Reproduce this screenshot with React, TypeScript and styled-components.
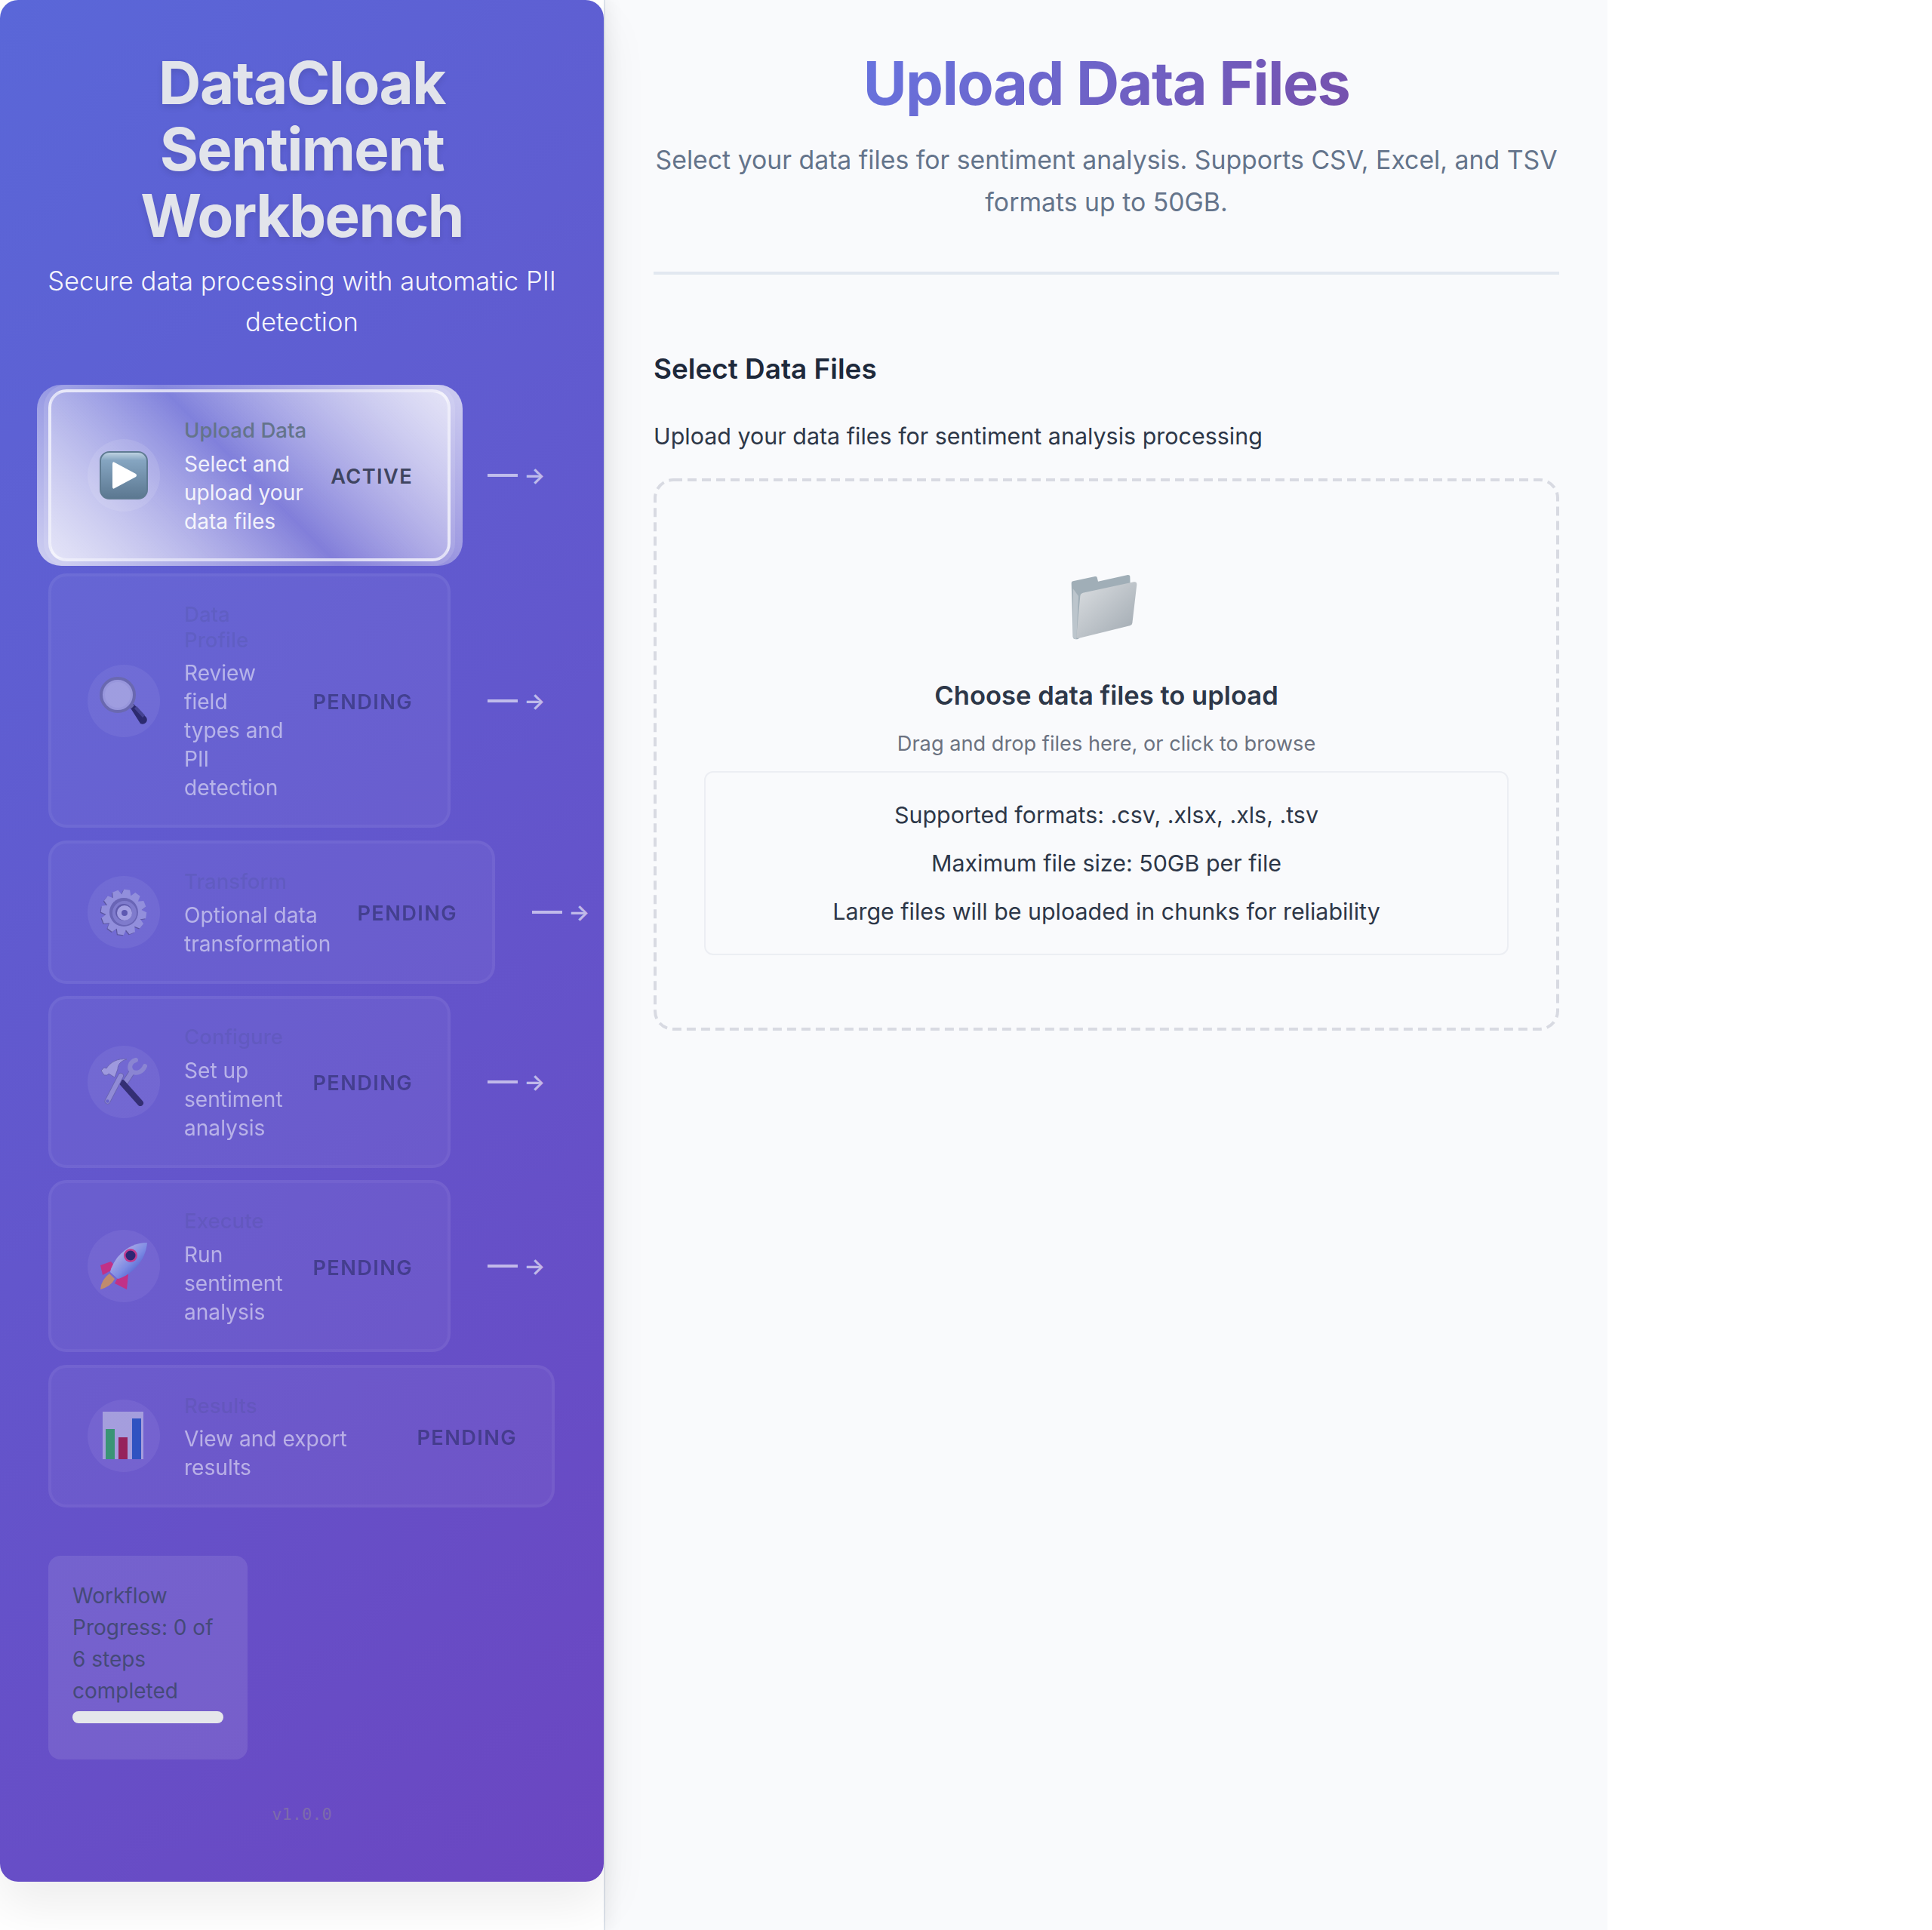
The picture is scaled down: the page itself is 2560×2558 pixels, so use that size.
import React from "react";
import styled, { createGlobalStyle, css } from "styled-components";

const GlobalStyle = createGlobalStyle`
  html, body {
    margin: 0;
    padding: 0;
    background: #fff;
    font-family: "Inter", "Liberation Sans", sans-serif;
  }
  * { box-sizing: border-box; }
`;

const Page = styled.div`
  display: flex;
  width: 2560px;
  min-height: 2558px;
  background: #fff;
`;

const SideColumn = styled.div`
  position: relative;
  z-index: 1;
  flex: 0 0 800px;
  width: 800px;
  min-width: 0;
  background: #fff;
  box-shadow: 8px 0 20px rgba(0, 0, 0, 0.05);
`;

const Sidebar = styled.aside`
  padding: 64px;
  height: 2494px;
  border-radius: 24px;
  color: #fff;
  background: linear-gradient(135deg, #5a67d8 0%, #6b46c1 100%);
  box-shadow: 0 32px 64px rgba(0, 0, 0, 0.07);
`;

const Brand = styled.h1`
  margin: 2px 0 16px;
  font-size: 78px;
  line-height: 88px;
  font-weight: 700;
  letter-spacing: -0.02em;
  text-align: center;
  color: #e2e4eb;
  text-shadow: 0 4px 8px rgba(0, 0, 0, 0.1);
`;

const Tagline = styled.p`
  margin: -1px -6px 63px;
  font-size: 34.65px;
  line-height: 54px;
  font-weight: 300;
  text-align: center;
  color: rgba(255, 255, 255, 0.95);
`;

const Steps = styled.div`
  display: flex;
  flex-direction: column;
  gap: 16.6px;
`;

const StepRow = styled.div`
  display: flex;
  align-items: center;
  isolation: isolate;
`;

const StepCard = styled.div<{ $active?: boolean; $width: number }>`
  position: relative;
  flex: 0 0 auto;
  display: flex;
  align-items: center;
  gap: 32px;
  width: ${(p) => p.$width}px;
  padding: 32px 48px;
  border-radius: 24px;
  border: 4px solid rgba(255, 255, 255, 0.08);
  background: rgba(255, 255, 255, 0.08);
  opacity: 0.6;
  ${(p) =>
    p.$active &&
    css`
      opacity: 1;
      border-color: rgba(255, 255, 255, 0.6);
      background: linear-gradient(
        45deg,
        rgba(255, 255, 255, 0.5) 0%,
        rgba(255, 255, 255, 0.08) 50%,
        rgba(255, 255, 255, 0.5) 100%
      );
      box-shadow: 0 0 0 6px rgba(255, 255, 255, 0.12);
      &::before {
        content: "";
        position: absolute;
        inset: -10px -20px -10px -19px;
        z-index: -1;
        border-radius: 32px;
        background: linear-gradient(
          45deg,
          rgba(255, 255, 255, 0.7) 0%,
          rgba(255, 255, 255, 0.15) 50%,
          rgba(255, 255, 255, 0.7) 100%
        );
      }
    `}
`;

const IconCircle = styled.div`
  flex: 0 0 96px;
  width: 96px;
  height: 96px;
  display: flex;
  align-items: center;
  justify-content: center;
  border-radius: 50%;
  background: rgba(255, 255, 255, 0.1);
`;

const StepText = styled.div`
  flex: 1 1 0;
  min-width: 0;
  margin: 2px 0 -2px;
`;

const StepTitle = styled.div<{ $active?: boolean }>`
  margin-bottom: 8px;
  font-size: 27.6px;
  line-height: 33.6px;
  font-weight: 500;
  white-space: ${(p) => (p.$active ? "nowrap" : "normal")};
  color: ${(p) => (p.$active ? "#64748b" : "rgba(70, 80, 130, 0.3)")};
`;

const StepDesc = styled.div`
  font-size: 28.1px;
  line-height: 38px;
  color: rgba(255, 255, 255, 0.9);
`;

const StepStatus = styled.div<{ $active?: boolean }>`
  flex: 0 0 auto;
  margin: 2px -2px -2px 0;
  font-size: 27.2px;
  font-weight: 600;
  letter-spacing: 1.4px;
  color: ${(p) => (p.$active ? "#3f4560" : "#2f3168")};
`;

const Connector = styled.div`
  flex: 0 0 auto;
  display: flex;
  align-items: center;
  gap: 8px;
  margin-left: 49px;
`;

const ConnectorLine = styled.div`
  width: 40px;
  height: 4px;
  background: rgba(255, 255, 255, 0.6);
`;

const ConnectorArrow = styled.span`
  font-size: 30px;
  font-weight: 600;
  line-height: 1;
  color: rgba(255, 255, 255, 0.6);
`;

const ProgressCard = styled.div`
  width: 264px;
  margin-top: 64px;
  padding: 32px 32px 48px;
  border-radius: 16px;
  background: rgba(255, 255, 255, 0.1);
`;

const ProgressText = styled.div`
  font-size: 28px;
  line-height: 42px;
  color: #454a78;
`;

const ProgressTrack = styled.div`
  height: 16px;
  margin-top: 6px;
  border-radius: 8px;
  background: #e5e7eb;
`;

const Version = styled.div`
  margin-top: 55px;
  font-family: "DejaVu Sans Mono", "Liberation Mono", monospace;
  font-size: 22px;
  line-height: 36px;
  text-align: center;
  color: #7d6bab;
`;

const Main = styled.main`
  flex: 0 0 1330px;
  padding: 64px;
  border-left: 2px solid #e2e8f0;
  background: #f9fafc;
`;

const Heading = styled.h2`
  width: fit-content;
  margin: 2px auto 30px;
  font-size: 79.2px;
  line-height: 88px;
  font-weight: 700;
  letter-spacing: -0.02em;
  text-align: center;
  color: transparent;
  background: linear-gradient(135deg, #6774e0 0%, #7650ac 100%);
  -webkit-background-clip: text;
  background-clip: text;
`;

const Lead = styled.p`
  margin: 0;
  font-size: 33.8px;
  line-height: 56.3px;
  text-align: center;
  color: #64748b;
`;

const Divider = styled.hr`
  height: 4px;
  margin: 63px 0 100px;
  border: 0;
  background: #e2e8f0;
`;

const SectionTitle = styled.h3`
  margin: 0 0 40px;
  font-size: 36.9px;
  line-height: 50px;
  font-weight: 600;
  color: #1e293b;
`;

const SectionHint = styled.p`
  margin: 0 0 32px;
  font-size: 30.45px;
  line-height: 48px;
  color: #2d3748;
`;

const DropZone = styled.div`
  position: relative;
  display: flex;
  flex-direction: column;
  align-items: center;
  height: 732px;
  padding: 126px 67px 0;
  border-radius: 24px;
`;

const DashedOutline = styled.svg`
  position: absolute;
  inset: 0;
  width: 100%;
  height: 100%;
  fill: none;
  stroke: #d8dae2;
  stroke-width: 4;
  stroke-dasharray: 12 7;
`;

const DropTitle = styled.div`
  margin-top: 40px;
  font-size: 34.6px;
  line-height: 50px;
  font-weight: 600;
  color: #2d3748;
`;

const DropHint = styled.div`
  margin-top: 19px;
  font-size: 27.2px;
  line-height: 42px;
  color: #6b7280;
`;

const FormatBox = styled.div`
  align-self: stretch;
  margin-top: 15px;
  padding: 24px 32px;
  border: 2px solid #eceef3;
  border-radius: 12px;
  text-align: center;
`;

const FormatLine = styled.div`
  font-size: 30.4px;
  line-height: 64px;
  color: #2d3748;
`;

const PlayIcon = () => (
  <svg width="64" height="64" viewBox="0 0 64 64">
    <defs>
      <linearGradient id="playFill" x1="0" y1="0" x2="0" y2="1">
        <stop offset="0" stopColor="#c3d6e4" />
        <stop offset="0.18" stopColor="#85a5c1" />
        <stop offset="1" stopColor="#5b7790" />
      </linearGradient>
    </defs>
    <rect x="1" y="1" width="62" height="62" rx="12" fill="url(#playFill)" stroke="#5f7b92" strokeWidth="2" />
    <path d="M17 17Q17 13 20 15L48 30Q50 32 48 34L20 49Q17 51 17 47Z" fill="#fff" />
  </svg>
);

const SearchIcon = () => (
  <svg width="64" height="64" viewBox="0 0 64 64">
    <path d="M40 40L45 36L62 54Q64 58 61 61Q58 64 54 62Z" fill="#0a0a30" />
    <path d="M46 42L49 39L60 51L57 54Z" fill="#33336a" />
    <path d="M38 38L42 34L46 38L42 42Z" fill="#71719b" />
    <circle cx="24" cy="24" r="22" fill="#bebee4" stroke="#71719b" strokeWidth="4" />
    <circle cx="24" cy="24" r="17" fill="#c9c9ea" />
  </svg>
);

const GearIcon = () => {
  const teeth = Array.from({ length: 12 }, (_, i) => i * 30);
  return (
    <svg width="64" height="64" viewBox="0 0 64 64">
      <g transform="translate(-1 1)">
        {teeth.map((deg) => (
          <path key={deg} d="M28 2L36 2L39 12L25 12Z" fill="#55527e" transform={`rotate(${deg + 8} 32 32)`} />
        ))}
      </g>
      {teeth.map((deg) => (
        <path key={deg} d="M28 2L36 2L39 12L25 12Z" fill="#b4b3e6" transform={`rotate(${deg + 8} 32 32)`} />
      ))}
      <circle cx="32" cy="32" r="23" fill="#b4b3e6" />
      <circle cx="32" cy="32" r="19" fill="#6f6da6" />
      <circle cx="33" cy="33" r="16" fill="#9492cc" />
      <circle cx="32" cy="32" r="11" fill="#5f5c96" />
      <circle cx="33" cy="33" r="10" fill="#cfcef0" />
      <circle cx="33" cy="33" r="4" fill="#5b589e" />
    </svg>
  );
};

const ToolsIcon = () => (
  <svg width="64" height="64" viewBox="0 0 64 64">
    <path d="M33 34L44 17" stroke="#6f6da0" strokeWidth="8.5" />
    <path d="M33 34L44 17" stroke="#a6a5d6" strokeWidth="6.5" />
    <path d="M48 3C40 5 38 14 43 18C48 22 57 19 60 11" fill="none" stroke="#a6a5d6" strokeWidth="6" strokeLinecap="round" />
    <path d="M30 33L54 60" stroke="#16153a" strokeWidth="8" strokeLinecap="round" />
    <path d="M28 24L10.5 57.5" stroke="#6f6da0" strokeWidth="8" strokeLinecap="round" />
    <path d="M28 24L10.5 57.5" stroke="#b0afdc" strokeWidth="6" strokeLinecap="round" />
    <circle cx="10.5" cy="57.5" r="2.2" fill="#6b68c8" />
    <path d="M2 17L6 13L9 14C14 6 24 0 36 2C28 4 24 9 24 15L20 26L12 21L10 23L6 23Z" fill="#c6c5ea" stroke="#6f6da0" strokeWidth="1" />
  </svg>
);

const RocketIcon = () => (
  <svg width="64" height="64" viewBox="0 0 64 64">
    <defs>
      <linearGradient id="rocketBody" x1="0.2" y1="0.2" x2="0.9" y2="0.9">
        <stop offset="0" stopColor="#eceffa" />
        <stop offset="0.5" stopColor="#8fb0f5" />
        <stop offset="1" stopColor="#2347c0" />
      </linearGradient>
    </defs>
    <path d="M1 31L15 26L22 34L4 44Z" fill="#ff1a5a" />
    <path d="M28 40L38 43L36 63L20 55Z" fill="#ff1a5a" />
    <path d="M13 42L20 49Q15 59 1 63Q2 50 13 42Z" fill="#ffb030" />
    <path d="M63 1C50 1 36 6 24 20C19 27 15 34 14 40L24 49C30 48 38 43 45 37C57 26 62 13 63 1Z" fill="url(#rocketBody)" />
    <circle cx="41" cy="18" r="9" fill="#ff2a6a" />
    <circle cx="41" cy="18" r="6.5" fill="#0a0a3c" />
  </svg>
);

const ChartIcon = () => (
  <svg width="64" height="64" viewBox="0 0 64 64">
    <rect x="4" y="0" width="54" height="63" fill="#d0d0eb" />
    <rect x="8" y="23" width="12" height="40" fill="#1ec13e" />
    <rect x="25" y="34" width="12" height="29" fill="#b70314" />
    <rect x="43" y="9" width="12" height="54" fill="#0d53bc" />
  </svg>
);

const FolderIcon = () => (
  <svg width="96" height="96" viewBox="117 60 288 288">
    <defs>
      <linearGradient id="folderFront" x1="0" y1="0" x2="1" y2="1">
        <stop offset="0" stopColor="#dcdfe2" />
        <stop offset="1" stopColor="#9fa8b0" />
      </linearGradient>
    </defs>
    <path d="M122 98Q122 92 128 91L216 72Q222 71 224 76L228 92L346 66Q354 65 355 72L356 110L150 320Q130 326 128 312Z" fill="#a0aeb7" />
    <path d="M128 120L128 312Q130 324 142 320L150 150Z" fill="#bcc5cc" />
    <path d="M157 150Q158 140 168 137L370 94Q382 92 382 104L364 258Q363 266 354 268L150 318Q140 320 142 310Z" fill="url(#folderFront)" />
  </svg>
);

const steps = [
  { title: "Upload Data", desc: "Select and upload your data files", status: "ACTIVE", width: 533, icon: <PlayIcon />, active: true, arrow: true },
  { title: "Data Profile", desc: "Review field types and PII detection", status: "PENDING", width: 533, icon: <SearchIcon />, arrow: true },
  { title: "Transform", desc: "Optional data transformation", status: "PENDING", width: 592, icon: <GearIcon />, arrow: true },
  { title: "Configure", desc: "Set up sentiment analysis", status: "PENDING", width: 533, icon: <ToolsIcon />, arrow: true },
  { title: "Execute", desc: "Run sentiment analysis", status: "PENDING", width: 533, icon: <RocketIcon />, arrow: true },
  { title: "Results", desc: "View and export results", status: "PENDING", width: 671, icon: <ChartIcon /> },
];

const formats = [
  "Supported formats: .csv, .xlsx, .xls, .tsv",
  "Maximum file size: 50GB per file",
  "Large files will be uploaded in chunks for reliability",
];

const App = () => {
  return (
    <Page>
      <GlobalStyle />
      <SideColumn>
        <Sidebar>
          <Brand>DataCloak Sentiment Workbench</Brand>
          <Tagline>Secure data processing with automatic PII detection</Tagline>
          <Steps>
            {steps.map((step) => (
              <StepRow key={step.title}>
                <StepCard $active={step.active} $width={step.width}>
                  <IconCircle>{step.icon}</IconCircle>
                  <StepText>
                    <StepTitle $active={step.active}>{step.title}</StepTitle>
                    <StepDesc>{step.desc}</StepDesc>
                  </StepText>
                  <StepStatus $active={step.active}>{step.status}</StepStatus>
                </StepCard>
                {step.arrow && (
                  <Connector>
                    <ConnectorLine />
                    <ConnectorArrow>→</ConnectorArrow>
                  </Connector>
                )}
              </StepRow>
            ))}
          </Steps>
          <ProgressCard>
            <ProgressText>Workflow Progress: 0 of 6 steps completed</ProgressText>
            <ProgressTrack />
          </ProgressCard>
          <Version>v1.0.0</Version>
        </Sidebar>
      </SideColumn>
      <Main>
        <Heading>Upload Data Files</Heading>
        <Lead>Select your data files for sentiment analysis. Supports CSV, Excel, and TSV formats up to 50GB.</Lead>
        <Divider />
        <SectionTitle>Select Data Files</SectionTitle>
        <SectionHint>Upload your data files for sentiment analysis processing</SectionHint>
        <DropZone>
          <DashedOutline>
            <rect x="2" y="2" width="1196" height="728" rx="24" />
          </DashedOutline>
          <FolderIcon />
          <DropTitle>Choose data files to upload</DropTitle>
          <DropHint>Drag and drop files here, or click to browse</DropHint>
          <FormatBox>
            {formats.map((line) => (
              <FormatLine key={line}>{line}</FormatLine>
            ))}
          </FormatBox>
        </DropZone>
      </Main>
    </Page>
  );
};

export default App;
